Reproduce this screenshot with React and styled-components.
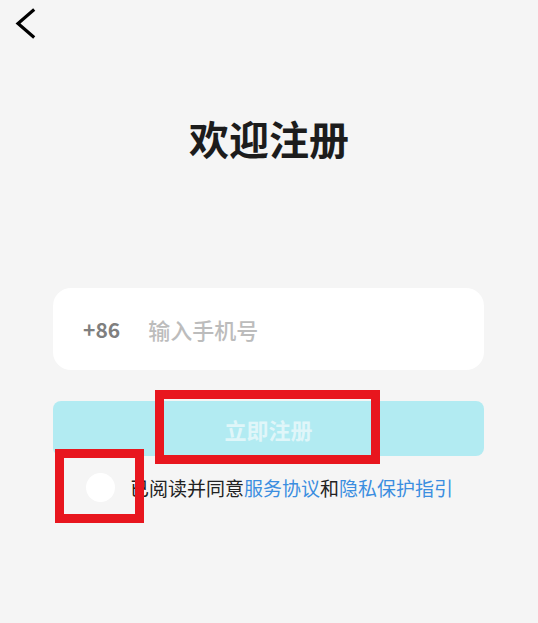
import * as React from 'react';
import styled, { createGlobalStyle } from 'styled-components';

const GlobalStyle = createGlobalStyle`
    html, body {
        margin: 0;
        padding: 0;
        background: #f5f5f5;
    }
    * {
        box-sizing: border-box;
    }
`

const Page = styled.div`
    min-height: 623px;
    background: #f5f5f5;
    font-family: "Noto Sans CJK SC", "Noto Sans", sans-serif;
    display: flex;
    flex-direction: column;
`

const Header = styled.div`
    height: 50px;
    padding: 6px 0 0 12px;
`

const BackButton = styled.button`
    border: none;
    background: none;
    padding: 0;
    width: 26px;
    height: 36px;
    cursor: pointer;
`

const Title = styled.h1`
    margin: 64px 0 0;
    font-size: 40px;
    line-height: 48px;
    font-weight: 700;
    color: #1c1c1c;
    text-align: center;
    letter-spacing: 0;
`

const Form = styled.div`
    margin: 126px 54px 0 53px;
    display: flex;
    flex-direction: column;
`

const PhoneCard = styled.div`
    height: 82px;
    background: #fff;
    border-radius: 18px;
    display: flex;
    align-items: center;
    padding-left: 30px;
    gap: 28px;
`

const Prefix = styled.span`
    font-size: 21px;
    font-weight: 700;
    color: #7f7f7f;
`

const PhoneInput = styled.input`
    flex: 1;
    border: none;
    outline: none;
    background: transparent;
    font-family: inherit;
    font-size: 22px;
    font-weight: 500;
    color: #333;
    padding: 0;
    &::placeholder {
        color: #bcbcbc;
    }
`

const SubmitWrap = styled.div`
    position: relative;
    margin-top: 31px;
`

const SubmitButton = styled.button`
    width: 100%;
    height: 55px;
    border: none;
    border-radius: 8px;
    background: #b2ebf2;
    color: #e0f6f9;
    font-family: inherit;
    font-size: 22px;
    font-weight: 700;
    cursor: pointer;
`

// red annotation frames drawn over the screenshot
const Mark = styled.div`
    position: absolute;
    left: ${p => p.$left}px;
    top: ${p => p.$top}px;
    width: ${p => p.$width}px;
    height: ${p => p.$height}px;
    border: 9px solid #e8161e;
    pointer-events: none;
`

const AgreeRow = styled.div`
    position: relative;
    margin-top: 17px;
    display: flex;
    align-items: center;
    padding-left: 33px;
    gap: 15px;
`

const Radio = styled.span`
    width: 29px;
    height: 29px;
    border-radius: 50%;
    background: #fff;
    flex: none;
`

const AgreeText = styled.span`
    font-size: 19px;
    color: #222;
    white-space: nowrap;
`

const Link = styled.a`
    color: #3b8ee0;
    text-decoration: none;
`

const BackIcon = () => (
    <svg width="26" height="36" viewBox="0 0 26 36">
        <path d="M21 4.5 L6 17.5 L21 30.5" fill="none" stroke="#000" strokeWidth="3.2" strokeLinecap="square" strokeLinejoin="miter" />
    </svg>
);

const App = () => {
    return (
        <Page>
            <GlobalStyle />
            <Header>
                <BackButton aria-label="返回"><BackIcon /></BackButton>
            </Header>
            <Title>欢迎注册</Title>
            <Form>
                <PhoneCard>
                    <Prefix>+86</Prefix>
                    <PhoneInput placeholder="输入手机号" />
                </PhoneCard>
                <SubmitWrap>
                    <SubmitButton>立即注册</SubmitButton>
                    <Mark $left={102} $top={-11} $width={225} $height={74} />
                </SubmitWrap>
                <AgreeRow>
                    <Radio />
                    <AgreeText>
                        已阅读并同意<Link>服务协议</Link>和<Link>隐私保护指引</Link>
                    </AgreeText>
                    <Mark $left={2} $top={-24} $width={89} $height={74} />
                </AgreeRow>
            </Form>
        </Page>
    );
}

export default App;
